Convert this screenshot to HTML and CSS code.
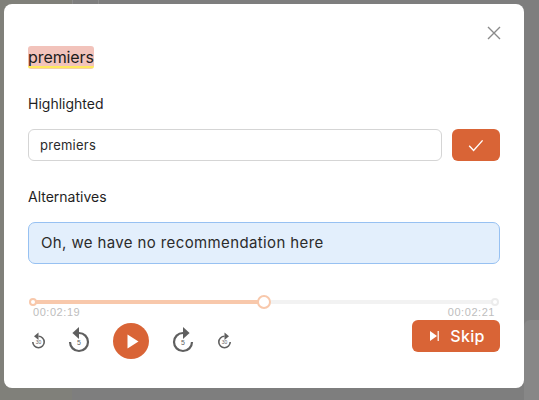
FILE: index.html
```html
<!DOCTYPE html>
<html lang="en">
<head>
<meta charset="utf-8">
<title>Review</title>
<link rel="stylesheet" href="styles.css">
</head>
<body>
<div class="backdrop">
  <div class="bg-line bg-line-a"></div>
  <div class="bg-line bg-line-b"></div>
  <div class="bg-tab"></div>
  <div class="bg-card"></div>
</div>
<main class="modal">
  <button class="close" aria-label="Close">
    <svg width="14" height="14" viewBox="0 0 14 14"><path d="M1 1l12 12M13 1L1 13" stroke="#8a8a8a" stroke-width="1.4" fill="none"/></svg>
  </button>
  <div class="title-row"><span class="word">premiers</span></div>
  <div class="label label-high">Highlighted</div>
  <div class="input-row">
    <div class="input">premiers</div>
    <button class="confirm" aria-label="Confirm">
      <svg width="16" height="13" viewBox="0 0 16 13"><path d="M1.2 6.8l4.4 4.6L14.6 1.4" stroke="#fff" stroke-width="1.4" fill="none"/></svg>
    </button>
  </div>
  <div class="label label-alt">Alternatives</div>
  <div class="alt-box">Oh, we have no recommendation here</div>
  <div class="player">
    <div class="track">
      <div class="track-fill"></div>
      <span class="dot dot-start"></span>
      <span class="dot dot-mid"></span>
      <span class="dot dot-end"></span>
    </div>
    <div class="times"><span>00:02:19</span><span>00:02:21</span></div>
    <div class="controls">
      <div class="transport">
        <svg class="ic-small ic-first" width="16" height="20" viewBox="0 0 16 20"><path d="M8.5 5.3A5.7 5.7 0 1 1 2.8 11" stroke="#5f5f5f" stroke-width="1.6" fill="none"/><path d="M8.5 1.5v7.6L4 5.3z" fill="#5f5f5f"/><text x="8.5" y="13" class="ic-num-s">30</text></svg>
        <svg class="ic-big" width="22" height="28" viewBox="0 0 22 28"><path d="M11 6A9 9 0 1 1 2 15" stroke="#5f5f5f" stroke-width="2.2" fill="none"/><path d="M11 0v12L4.4 6z" fill="#5f5f5f"/><text x="11" y="18" class="ic-num">5</text></svg>
        <button class="play" aria-label="Play">
          <svg width="12" height="15" viewBox="0 0 12 15"><path d="M0.5 0.5L11.5 7.5L0.5 14.5z" fill="#fff"/></svg>
        </button>
        <svg class="ic-big" width="22" height="28" viewBox="0 0 22 28"><path d="M11 6A9 9 0 1 0 20 15" stroke="#5f5f5f" stroke-width="2.2" fill="none"/><path d="M11 0v12L17.6 6z" fill="#5f5f5f"/><text x="11" y="18" class="ic-num">5</text></svg>
        <svg class="ic-small" width="16" height="20" viewBox="0 0 16 20"><path d="M7.5 5.3A5.7 5.7 0 1 0 13.2 11" stroke="#5f5f5f" stroke-width="1.6" fill="none"/><path d="M7.5 1.5v7.6L12 5.3z" fill="#5f5f5f"/><text x="7.5" y="13" class="ic-num-s">30</text></svg>
      </div>
      <button class="skip">
        <svg width="9" height="10" viewBox="0 0 9 10"><path d="M0 0L7 5L0 10z" fill="#fff"/><rect x="7.6" y="0" width="1.2" height="10" fill="#fff"/></svg>
        <span>Skip</span>
      </button>
    </div>
  </div>
</main>
</body>
</html>
```

FILE: styles.css
```css
* { box-sizing: border-box; }
html, body { margin: 0; height: 100%; }
body {
  width: 539px;
  height: 400px;
  overflow: hidden;
  background: #7f7f7f;
  font-family: Inter, "Liberation Sans", sans-serif;
  color: #1c1c1c;
  padding: 4px 15px 12px 4px;
  position: relative;
}
.backdrop { position: absolute; inset: 0; background: #7e7e7e; }
.bg-line { position: absolute; top: 0; height: 4px; width: 1px; background: #8c8c8c; }
.bg-line-a { left: 72px; }
.bg-line-b { left: 98px; }
.bg-tab { position: absolute; left: 0; top: 0; width: 72px; height: 400px; background: #80807a; }
.bg-card { position: absolute; left: 524px; top: 320px; width: 15px; height: 80px; background: #878787; border-radius: 6px 0 0 0; }
.modal {
  position: relative;
  width: 520px;
  height: 384px;
  background: #fff;
  border-radius: 8px;
  padding: 42px 24px 0 24px;
  display: flex;
  flex-direction: column;
}
button { border: 0; padding: 0; font: inherit; cursor: pointer; }
.close {
  position: absolute;
  top: 22px;
  right: 23px;
  width: 14px;
  height: 14px;
  background: none;
  display: flex;
}
.title-row { display: flex; height: 23px; }
.word {
  font-size: 16px;
  letter-spacing: -0.08px;
  line-height: 22px;
  height: 23px;
  background: linear-gradient(#f2c3bb 20px, #ffe95c 20px, #ffe95c 22px, #f6cfa8 22px);
  border-radius: 3px;
  color: #1c1c1c;
}
.label { font-size: 14px; line-height: 16px; color: #1f1f1f; }
.label-high { margin-top: 27px; }
.input-row { display: flex; gap: 10px; margin-top: 17px; height: 32px; }
.input {
  flex: 1;
  border: 1px solid #d5d5d5;
  border-radius: 6px;
  padding: 0 11px;
  font-size: 13px;
  letter-spacing: 0.25px;
  line-height: 30px;
  color: #2b2b2b;
}
.confirm {
  width: 48px;
  background: #d96436;
  border-radius: 6px;
  display: flex;
  align-items: center;
  justify-content: center;
}
.label-alt { margin-top: 28px; }
.alt-box {
  margin-top: 17px;
  height: 42px;
  background: #e3effc;
  border: 1px solid #97c1f2;
  border-radius: 7px;
  padding: 0 12px;
  font-size: 15px;
  letter-spacing: 0.38px;
  line-height: 40px;
  color: #2b2b2b;
}
.player { margin-top: 36px; }
.track {
  position: relative;
  height: 4px;
  background: #f2f2f2;
  margin-left: 5px;
  width: 462px;
}
.track-fill { width: 231px; height: 100%; background: #f8c8ab; }
.dot { position: absolute; border-radius: 50%; background: #fff; }
.dot-start { left: -4px; top: -2px; width: 8px; height: 8px; border: 2px solid #f8c8ab; }
.dot-mid { left: 224px; top: -5px; width: 14px; height: 14px; border: 2px solid #f8c8ab; }
.dot-end { right: -4px; top: -2px; width: 8px; height: 8px; border: 2px solid #ececec; }
.times {
  display: flex;
  justify-content: space-between;
  width: 462px;
  margin: 2px 0 0 5px;
  font-family: "Liberation Sans", sans-serif;
  font-size: 11px;
  line-height: 13px;
  color: #bdbdbd;
  letter-spacing: 0.55px;
}
.controls { display: flex; justify-content: space-between; align-items: flex-start; margin-top: 1px; }
.transport { display: flex; align-items: center; width: 210px; margin-top: 3px; padding-left: 2px; gap: 23px; }
.ic-first { margin-right: -1px; }
.play {
  width: 36px;
  height: 36px;
  background: #d96436;
  border-radius: 50%;
  display: flex;
  align-items: center;
  justify-content: center;
  padding-left: 3px;
}
.ic-num { font-size: 7px; fill: #5f5f5f; text-anchor: middle; font-family: "Liberation Sans", sans-serif; }
.ic-num-s { font-size: 5px; fill: #5f5f5f; text-anchor: middle; font-family: "Liberation Sans", sans-serif; }
.skip {
  width: 88px;
  height: 32px;
  padding-left: 3px;
  background: #d96436;
  border-radius: 6px;
  color: #fff;
  font-size: 16px;
  letter-spacing: 0.3px;
  font-weight: 500;
  display: flex;
  align-items: center;
  justify-content: center;
  gap: 11px;
}
```
